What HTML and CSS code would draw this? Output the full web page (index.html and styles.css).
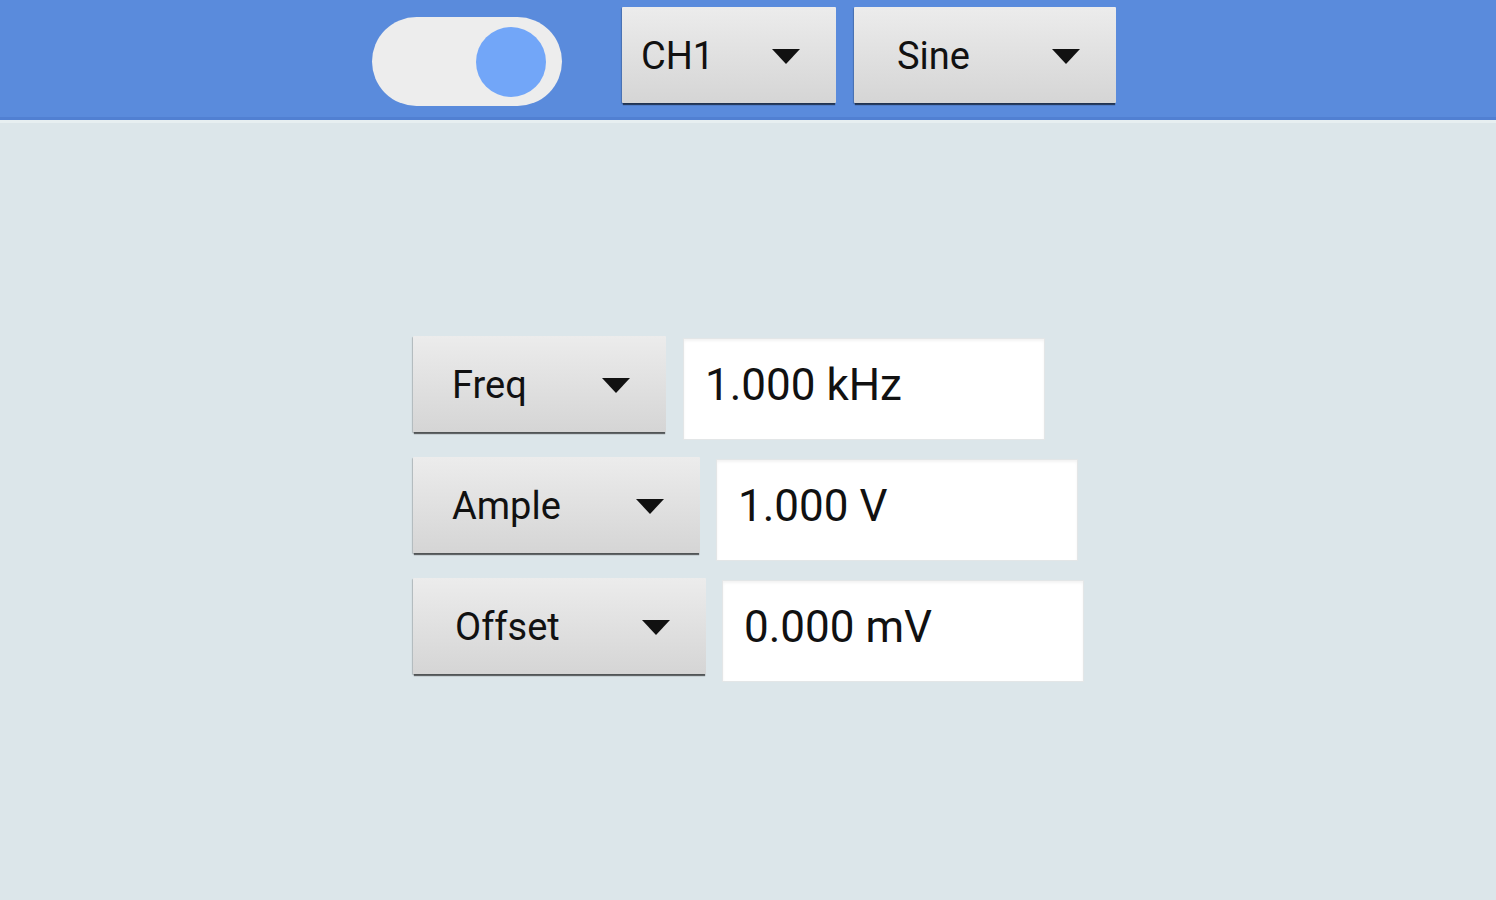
FILE: index.html
```html
<!DOCTYPE html>
<html lang="en">
<head>
  <meta charset="UTF-8" />
  <meta name="viewport" content="width=device-width, initial-scale=1.0" />
  <title>Signal Generator</title>
  <link rel="stylesheet" href="styles.css">
</head>
<body>
  <header class="topbar">
    <div class="toggle"><span class="knob"></span></div>
    <button class="select select-ch">CH1 <span class="caret"></span></button>
    <button class="select select-wave">Sine <span class="caret"></span></button>
  </header>
  <main class="panel">
    <div class="row">
      <button class="select param param-freq">Freq <span class="caret"></span></button>
      <div class="value">1.000 kHz</div>
    </div>
    <div class="row">
      <button class="select param param-ample">Ample <span class="caret"></span></button>
      <div class="value">1.000 V</div>
    </div>
    <div class="row">
      <button class="select param param-offset">Offset <span class="caret"></span></button>
      <div class="value">0.000 mV</div>
    </div>
  </main>
</body>
</html>
```

FILE: styles.css
```css
body {
  margin: 0;
  background: #dce6ea;
  font-family: Roboto, "Liberation Sans", sans-serif;
  color: #111;
}
.topbar {
  display: flex;
  align-items: flex-start;
  height: 117px;
  padding-left: 372px;
  background: #5a8bdc;
  border-bottom: 3px solid #5180d2;
  box-shadow: 0 3px 0 #e7eff1;
}
.toggle {
  display: flex;
  align-items: center;
  justify-content: flex-end;
  box-sizing: border-box;
  width: 190px;
  height: 89px;
  margin-top: 17px;
  padding-right: 16px;
  border-radius: 45px;
  background: #ededed;
}
.knob {
  width: 70px;
  height: 70px;
  border-radius: 50%;
  background: #72a6f8;
}
.select {
  display: flex;
  align-items: center;
  justify-content: space-between;
  box-sizing: border-box;
  height: 96px;
  padding: 2px 36px 0 39px;
  border: 0;
  border-radius: 1px;
  background: linear-gradient(#ececec, #d5d5d5);
  box-shadow: 0 3px 1px -1px rgba(0, 0, 0, 0.55), -1px 1px 1px rgba(0, 0, 0, 0.2);
  font-family: Roboto, "Liberation Sans", sans-serif;
  font-size: 38px;
  color: #111;
}
.caret {
  width: 0;
  height: 0;
  border-left: 14px solid transparent;
  border-right: 14px solid transparent;
  border-top: 15px solid #111;
}
.select-ch {
  width: 214px;
  margin: 7px 0 0 60px;
  padding-left: 19px;
}
.select-wave {
  width: 262px;
  margin: 7px 0 0 18px;
  padding-left: 43px;
}
.panel {
  display: flex;
  flex-direction: column;
  gap: 17px;
  padding: 216px 0 0 413px;
}
.row {
  display: flex;
  align-items: flex-start;
  gap: 16px;
}
.param-freq { width: 253px; }
.param-ample { width: 287px; }
.param-offset { width: 293px; padding-left: 42px; }
.param-freq + .value { margin-left: 1px; }
.value {
  box-sizing: border-box;
  width: 362px;
  height: 102px;
  margin-top: 2px;
  padding: 20px 0 0 21px;
  background: #fff;
  border: 1px solid #e3e6e7;
  box-shadow: inset 0 2px 3px rgba(0, 0, 0, 0.05);
  font-size: 44px;
  line-height: 52px;
}
```
